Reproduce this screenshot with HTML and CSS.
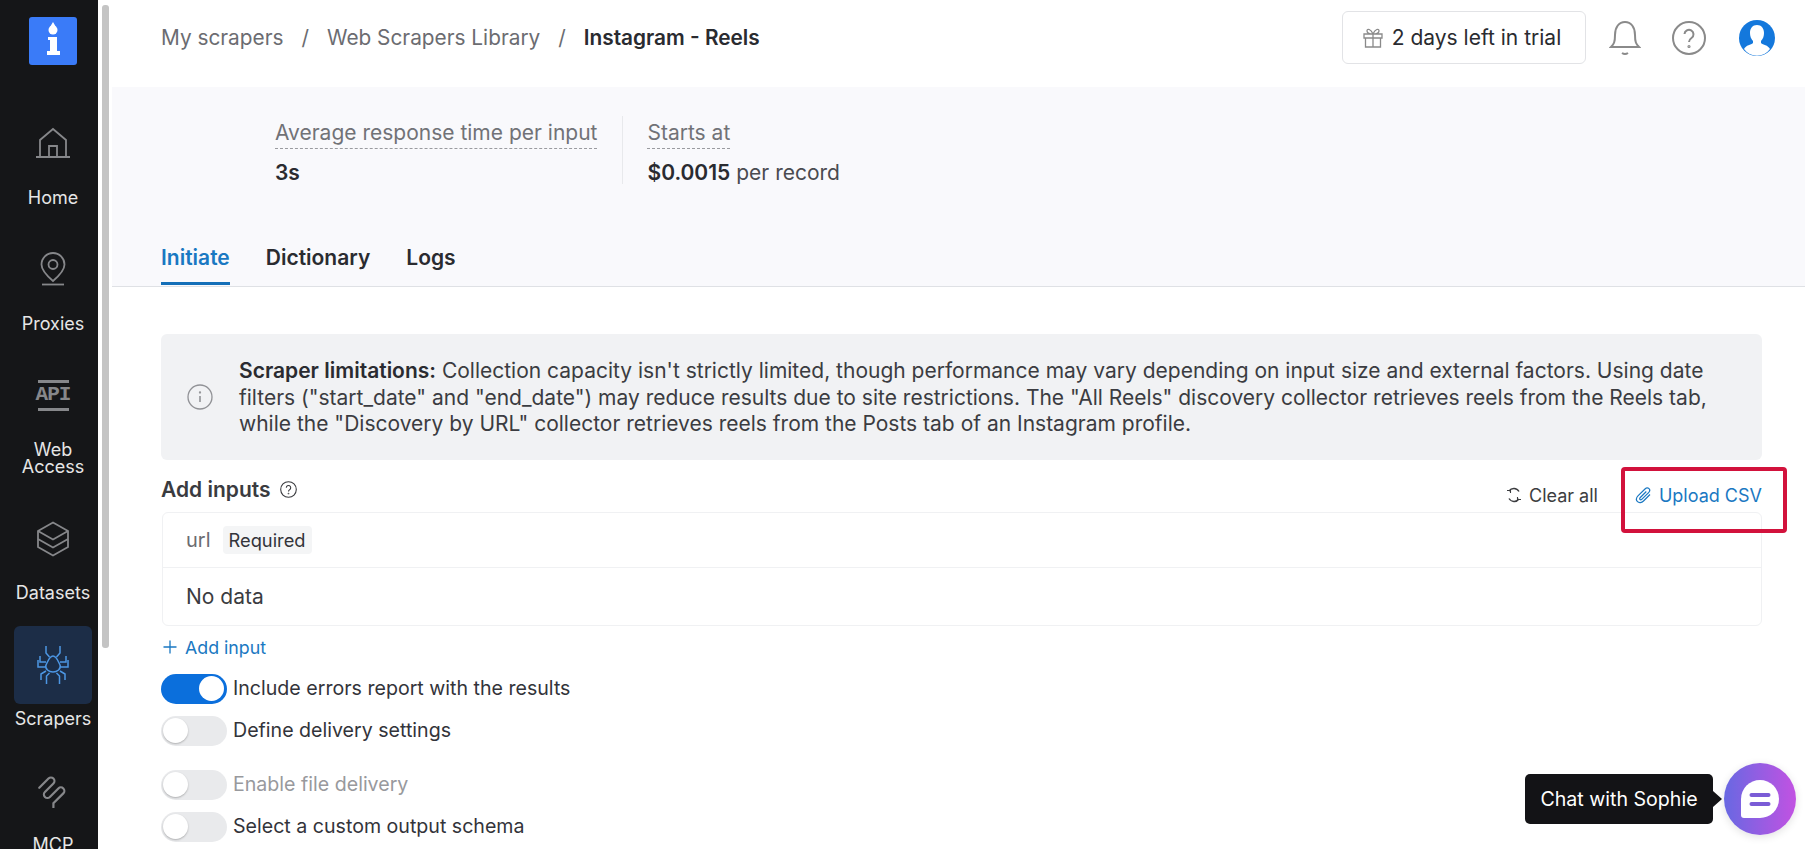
FILE: index.html
```html
<!DOCTYPE html>
<html lang="en">
<head>
    <meta charset="UTF-8">
    <meta name="viewport" content="width=device-width, initial-scale=1.0">
    <title>Instagram - Reels</title>
    <link rel="stylesheet" href="styles.css">
</head>
<body>
    <nav class="sidebar">
        <div class="logo">
            <svg width="48" height="48" viewBox="0 0 48 48"><circle cx="24" cy="13" r="4.500" fill="#fff"/><path d="M24 5l3 5h-6z" fill="#fff"/><path d="M19 20h9v14h3v4H18v-4h3V23h-2z" fill="#fff"/></svg>
        </div>
        <a class="nav-item">
            <span class="nav-icon">
                <svg width="36" height="32" viewBox="0 0 36 32" fill="none" stroke="#86878a" stroke-width="1.8"><path d="M1 30h34M5 30V13L18 2l13 11v17"/><path d="M14 30V19h8v11"/></svg>
            </span>
            <span class="nav-label">Home</span>
        </a>
        <a class="nav-item">
            <span class="nav-icon">
                <svg width="26" height="34" viewBox="0 0 26 34" fill="none" stroke="#86878a" stroke-width="1.8"><path d="M13 29C6 23 1.500 18 1.500 12.500a11.500 11.500 0 0 1 23 0C24.500 18 20 23 13 29z"/><circle cx="13" cy="12.500" r="4.500"/><path d="M2 32.500h22"/></svg>
            </span>
            <span class="nav-label">Proxies</span>
        </a>
        <a class="nav-item">
            <span class="nav-icon">
                <span class="api-mark">API</span>
            </span>
            <span class="nav-label">Web<br>Access</span>
        </a>
        <a class="nav-item">
            <span class="nav-icon">
                <svg width="34" height="36" viewBox="0 0 34 36" fill="none" stroke="#86878a" stroke-width="1.800"><path d="M17 1.500L32 10v16l-15 8.500L2 26V10z"/><path d="M2 10l15 8.500L32 10M2 18l15 8.500L32 18"/></svg>
            </span>
            <span class="nav-label">Datasets</span>
        </a>
        <a class="nav-item active">
            <span class="nav-icon">
                <svg width="36" height="40" viewBox="0 0 36 40" fill="none" stroke="#4c96e4" stroke-width="1.500"><path d="M18 11c-3.500 0-5 5-7 9-1.500 4 3 7 7 7s8.500-3 7-7c-2-4-3.500-9-7-9z"/><path d="M11 1v7l3.500 4M25 1v7l-3.500 4M11 17H5v-6M25 17h6v-6M10 22H3V15M26 22h7V15M11 26l-5 3v6M25 26l5 3v6M14.500 28l-3 3v8M21.500 28l3 3v8"/></svg>
            </span>
            <span class="nav-label">Scrapers</span>
        </a>
        <a class="nav-item">
            <span class="nav-icon">
                <svg width="30" height="34" viewBox="0 0 30 34" fill="none" stroke="#86878a" stroke-width="2.200" stroke-linecap="round"><g transform="translate(14 1) rotate(45)"><path d="M0 18V5a3.500 3.500 0 0 1 7 0V17a3.500 3.500 0 0 0 7 0V5a3.500 3.500 0 0 1 7 0V19l3 3"/></g></svg>
            </span>
            <span class="nav-label">MCP</span>
        </a>
    </nav>

    <div class="scroll-track"><div class="scroll-thumb"></div></div>

    <main class="main">
        <header class="topbar">
            <div class="crumbs">
                <span>My scrapers</span>
                <span>/</span>
                <span>Web Scrapers Library</span>
                <span>/</span>
                <b>Instagram - Reels</b>
            </div>
            <div class="top-actions">
                <div class="trial">
                    <svg width="20" height="20" viewBox="0 0 20 20" fill="none" stroke="#8a8a8a" stroke-width="1.300"><path d="M1 6h18v4H1zM2.500 10v9h15v-9M10 6v13M10 6C8 1 4 0 4 3c0 2 3 3 6 3zM10 6c2-5 6-6 6-3 0 2-3 3-6 3z"/></svg>
                    2 days left in trial
                </div>
                <svg class="top-icon bell" width="32" height="36" viewBox="0 0 32 36" fill="none" stroke="#8a8a8a" stroke-width="2"><path d="M2 27c3-3 4-5 4-12C6 7 10 2 16 2s10 5 10 13c0 7 1 9 4 12z"/><path d="M13 33q3 2 6 0"/></svg>
                <svg class="top-icon" width="34" height="34" viewBox="0 0 34 34" fill="none" stroke="#8a8a8a" stroke-width="2"><circle cx="17" cy="17" r="16"/><path d="M12.500 13a4.500 4.500 0 1 1 7 4c-1.500 1-2.500 2-2.500 4"/><circle cx="17" cy="25.500" r="0.600"/></svg>
                <svg class="avatar" width="36" height="36" viewBox="0 0 36 36"><circle cx="18" cy="18" r="18" fill="#1478dc"/><path d="M18 5c4.500 0 7 3.500 7 8 0 3-1 6-3 8v2c2 2 7 2 9 6a16 16 0 0 1-26 0c2-4 7-4 9-6v-2c-2-2-3-5-3-8 0-4.500 2.500-8 7-8z" fill="#fff"/></svg>
            </div>
        </header>

        <section class="summary">
            <div class="stats">
                <div class="stat">
                    <div class="stat-label">Average response time per input</div>
                    <div class="stat-value"><b>3s</b></div>
                </div>
                <div class="stat stat-second">
                    <div class="stat-label">Starts at</div>
                    <div class="stat-value"><b>$0.0015</b> per record</div>
                </div>
            </div>
            <div class="tabs">
                <a class="tab current">Initiate</a>
                <a class="tab">Dictionary</a>
                <a class="tab">Logs</a>
            </div>
        </section>

        <section class="content">
            <div class="notice">
                <svg class="notice-icon" width="26" height="26" viewBox="0 0 26 26" fill="none" stroke="#919296" stroke-width="1.300"><circle cx="13" cy="13" r="12"/><path d="M13 12v6" stroke-width="1.600"/><circle cx="13" cy="8.500" r="0.500"/></svg>
                <p><b>Scraper limitations:</b> Collection capacity isn't strictly limited, though performance may vary depending on input size and external factors. Using date filters ("start_date" and "end_date") may reduce results due to site restrictions. The "All Reels" discovery collector retrieves reels from the Reels tab, while the "Discovery by URL" collector retrieves reels from the Posts tab of an Instagram profile.</p>
            </div>

            <div class="inputs-head">
                <div class="inputs-title">
                    Add inputs
                    <svg width="17" height="17" viewBox="0 0 17 17" fill="none" stroke="#3a3b3f" stroke-width="1.100"><circle cx="8.500" cy="8.500" r="7.800"/><path d="M6.300 6.700a2.200 2.200 0 1 1 3.400 1.900c-.8.500-1.200 1-1.200 1.900"/><circle cx="8.500" cy="12.500" r="0.300"/></svg>
                </div>
                <div class="inputs-actions">
                    <a class="clear">
                        <svg width="16" height="16" viewBox="0 0 16 16" fill="none" stroke="#3c3d40" stroke-width="1.400"><path d="M13 4.500A6 6 0 0 0 3 4M3 11.500A6 6 0 0 0 13 12"/><path d="M1 3.500h3.500V6M15 12.500h-3.500V10" stroke-width="1.100"/></svg>
                        Clear all
                    </a>
                    <a class="upload">
                        <svg width="17" height="17" viewBox="0 0 17 17" fill="none" stroke="#1a78c2" stroke-width="1.200"><path d="M15 7.500l-6.500 6.500c-2 2-4.500 2.200-6 .7s-1.300-4 .7-6L10 2c1.300-1.300 3-1.400 4-.4s.9 2.700-.4 4L7 12.200c-.7.700-1.500.8-2 .3s-.4-1.300.3-2l6-6"/></svg>
                        Upload CSV
                    </a>
                </div>
            </div>
            <div class="annotation"></div>

            <div class="table">
                <div class="table-row table-head">
                    <span class="col-name">url</span>
                    <span class="tag">Required</span>
                </div>
                <div class="table-row table-empty">No data</div>
            </div>

            <a class="add-input">
                <svg width="14" height="14" viewBox="0 0 14 14" stroke="#1a78c2" stroke-width="1.300"><path d="M7 0.500v13M0.500 7h13"/></svg>
                Add input
            </a>

            <div class="toggle-row first">
                <span class="toggle on"></span>
                <span class="toggle-text">Include errors report with the results</span>
            </div>
            <div class="toggle-row">
                <span class="toggle"></span>
                <span class="toggle-text">Define delivery settings</span>
            </div>
            <div class="toggle-row spaced disabled">
                <span class="toggle"></span>
                <span class="toggle-text">Enable file delivery</span>
            </div>
            <div class="toggle-row">
                <span class="toggle"></span>
                <span class="toggle-text">Select a custom output schema</span>
            </div>
        </section>
    </main>

    <div class="chat">
        <div class="chat-tip">Chat with Sophie</div>
        <div class="chat-btn">
            <svg width="40" height="40" viewBox="0 0 40 40"><path d="M20 1a19 19 0 0 1 0 38H4q-3 0-3-3V20A19 19 0 0 1 20 1z" fill="#fff"/><rect x="9.500" y="14" width="21" height="4" rx="2" fill="#7a5cd6"/><rect x="9.500" y="23" width="21" height="4" rx="2" fill="#7a5cd6"/></svg>
        </div>
    </div>
</body>
</html>
```

FILE: styles.css
```css
* {
    box-sizing: border-box;
}
html, body {
    height: 100%;
}
body {
    margin: 0;
    display: flex;
    overflow: hidden;
    background: #fff;
    color: #2a2b30;
    font-family: Inter, "Liberation Sans", sans-serif;
    font-size: 21px;
}
b {
    font-weight: 600;
}

/* sidebar */
.sidebar {
    width: 98px;
    flex: none;
    height: 100%;
    overflow: hidden;
    background: #151618;
    display: flex;
    flex-direction: column;
    align-items: center;
    padding: 17px 0 0 8px;
}
.logo {
    width: 48px;
    height: 48px;
    flex: none;
    margin-bottom: 39px;
    border-radius: 3px;
    background: #3a7bf8;
}
.logo svg {
    display: block;
}
.nav-item {
    flex: none;
    width: 78px;
    margin-bottom: 24px;
    display: flex;
    flex-direction: column;
    align-items: center;
    color: #e6e6e6;
    font-size: 18px;
    line-height: 17.500px;
    text-align: center;
}
.nav-icon {
    width: 78px;
    height: 78px;
    margin-bottom: 6.500px;
    display: flex;
    align-items: center;
    justify-content: center;
    border-radius: 6px;
}
.nav-item.active .nav-icon {
    background: #1c2d47;
}
.nav-label {
    white-space: nowrap;
}
.api-mark {
    width: 31px;
    height: 31px;
    display: flex;
    align-items: center;
    justify-content: center;
    border-top: 3px solid #86878a;
    border-bottom: 3px solid #86878a;
    color: #86878a;
    font-family: "Liberation Mono", monospace;
    font-size: 21px;
    font-weight: 700;
    letter-spacing: -1px;
}

/* page scrollbar */
.scroll-track {
    width: 14px;
    flex: none;
    padding: 5px 3px 0 4px;
}
.scroll-thumb {
    height: 643px;
    border-radius: 3px;
    background: #c4c4c4;
}

.main {
    flex: 1;
    min-width: 0;
}

/* top bar */
.topbar {
    height: 87px;
    padding: 11px 30px 0 49px;
    display: flex;
    align-items: flex-start;
    justify-content: space-between;
}
.crumbs {
    height: 53px;
    display: flex;
    align-items: center;
    gap: 18px;
    font-size: 20.800px;
    color: #6b6c71;
}
.crumbs b {
    color: #2a2b30;
}
.top-actions {
    display: flex;
    align-items: center;
    height: 53px;
}
.trial {
    width: 244px;
    height: 53px;
    margin-right: 23px;
    padding-right: 4px;
    display: flex;
    align-items: center;
    justify-content: center;
    gap: 9px;
    border: 1px solid #e2e3e6;
    border-radius: 6px;
    font-size: 21px;
}
.top-icon {
    flex: none;
    margin-right: 33px;
}
.top-icon.bell {
    margin-right: 31px;
}
.avatar {
    flex: none;
}

/* stats + tabs */
.summary {
    height: 200px;
    padding: 29px 0 0 49px;
    background: #f9f9fc;
    border-bottom: 1px solid #dfe1e5;
}
.stats {
    display: flex;
    height: 68px;
    margin-left: 114px;
}
.stat {
    padding: 3px 25px 0 0;
}
.stat-second {
    padding-left: 24px;
    border-left: 1px solid #e8e9ec;
}
.stat-label {
    display: inline-block;
    padding-bottom: 2px;
    border-bottom: 1px dashed #9a9ba0;
    color: #717277;
    line-height: 27px;
}
.stat-value {
    margin-top: 11px;
    line-height: 26px;
    color: #4a4b50;
}
.stat-value b {
    color: #2a2b30;
}
.tabs {
    display: flex;
    gap: 36px;
    margin-top: 60px;
}
.tab {
    height: 41px;
    padding-top: 1px;
    line-height: 26px;
    font-weight: 600;
    color: #2a2b30;
}
.tab.current {
    color: #1a78c2;
    border-bottom: 3px solid #146fb8;
}

/* main content */
.content {
    position: relative;
    padding: 47px 43px 0 49px;
}
.notice {
    height: 126px;
    display: flex;
    align-items: center;
    padding-left: 26px;
    background: #f1f2f4;
    border-radius: 6px;
}
.notice-icon {
    flex: none;
    margin-right: 26px;
}
.notice p {
    margin: 0;
    padding: 2px 40px 0 0;
    line-height: 26.500px;
    color: #3b3c41;
}
.notice b {
    color: #2a2b30;
}
.inputs-head {
    height: 52px;
    display: flex;
    justify-content: space-between;
}
.inputs-title {
    display: flex;
    align-items: center;
    gap: 9px;
    height: 58px;
    font-weight: 600;
    color: #3a3b3f;
}
.inputs-actions {
    display: flex;
    align-items: center;
    gap: 37px;
    height: 70px;
    font-size: 18px;
}
.clear, .upload {
    display: flex;
    align-items: center;
    gap: 7px;
}
.clear {
    color: #3c3d40;
}
.upload, .add-input {
    color: #1a78c2;
}
.annotation {
    position: absolute;
    left: 1509px;
    top: 180px;
    width: 166px;
    height: 66px;
    border: 4px solid #d2123c;
    border-radius: 4px;
}
.table {
    margin-left: 1px;
    border: 1px solid #f0f1f3;
    border-radius: 6px;
}
.table-row {
    display: flex;
    align-items: center;
    padding-left: 23px;
}
.table-head {
    height: 55px;
    gap: 12px;
    border-bottom: 1px solid #f0f1f3;
}
.col-name {
    color: #6b6c71;
    font-size: 20px;
}
.tag {
    height: 28px;
    padding: 0 6px;
    display: flex;
    align-items: center;
    background: #f4f5f6;
    border-radius: 4px;
    font-size: 18.300px;
    color: #33343a;
}
.table-empty {
    height: 57px;
    color: #3b3c41;
}
.add-input {
    display: flex;
    align-items: center;
    gap: 8px;
    margin: 10px 0 0 2px;
    height: 22px;
    font-size: 17.800px;
}

/* toggles */
.toggle-row {
    display: flex;
    align-items: center;
    gap: 6px;
    height: 30px;
    margin-top: 12px;
    font-size: 19.600px;
    color: #33343a;
}
.toggle-row.first {
    margin-top: 16px;
}
.toggle-row.spaced {
    margin-top: 24px;
}
.toggle-row.disabled {
    color: #98999d;
}
.toggle-text {
    padding-bottom: 2px;
}
.toggle {
    position: relative;
    width: 66px;
    height: 30px;
    flex: none;
    border-radius: 15px;
    background: #e9eaec;
}
.toggle::after {
    content: "";
    position: absolute;
    left: 2px;
    top: 2px;
    width: 25px;
    height: 25px;
    border-radius: 50%;
    background: #fff;
    box-shadow: 0 1px 2px rgba(0, 0, 0, 0.25);
}
.toggle.on {
    background: #0b6fdc;
}
.toggle.on::after {
    left: 38px;
    box-shadow: none;
}

/* chat widget */
.chat {
    position: fixed;
    right: 9px;
    bottom: 14px;
    display: flex;
    align-items: center;
}
.chat-tip {
    position: relative;
    width: 188px;
    height: 50px;
    margin-right: 11px;
    display: flex;
    align-items: center;
    justify-content: center;
    background: #131316;
    border-radius: 5px;
    color: #fff;
    font-size: 19.600px;
}
.chat-tip::after {
    content: "";
    position: absolute;
    left: 100%;
    top: 17px;
    border: 8px solid transparent;
    border-left: 9px solid #131316;
    border-right: 0;
}
.chat-btn {
    width: 72px;
    height: 72px;
    display: flex;
    align-items: center;
    justify-content: center;
    border-radius: 50%;
    background: linear-gradient(90deg, #6868e2, #c252e2);
    box-shadow: 0 2px 8px rgba(0, 0, 0, 0.12);
}
```
